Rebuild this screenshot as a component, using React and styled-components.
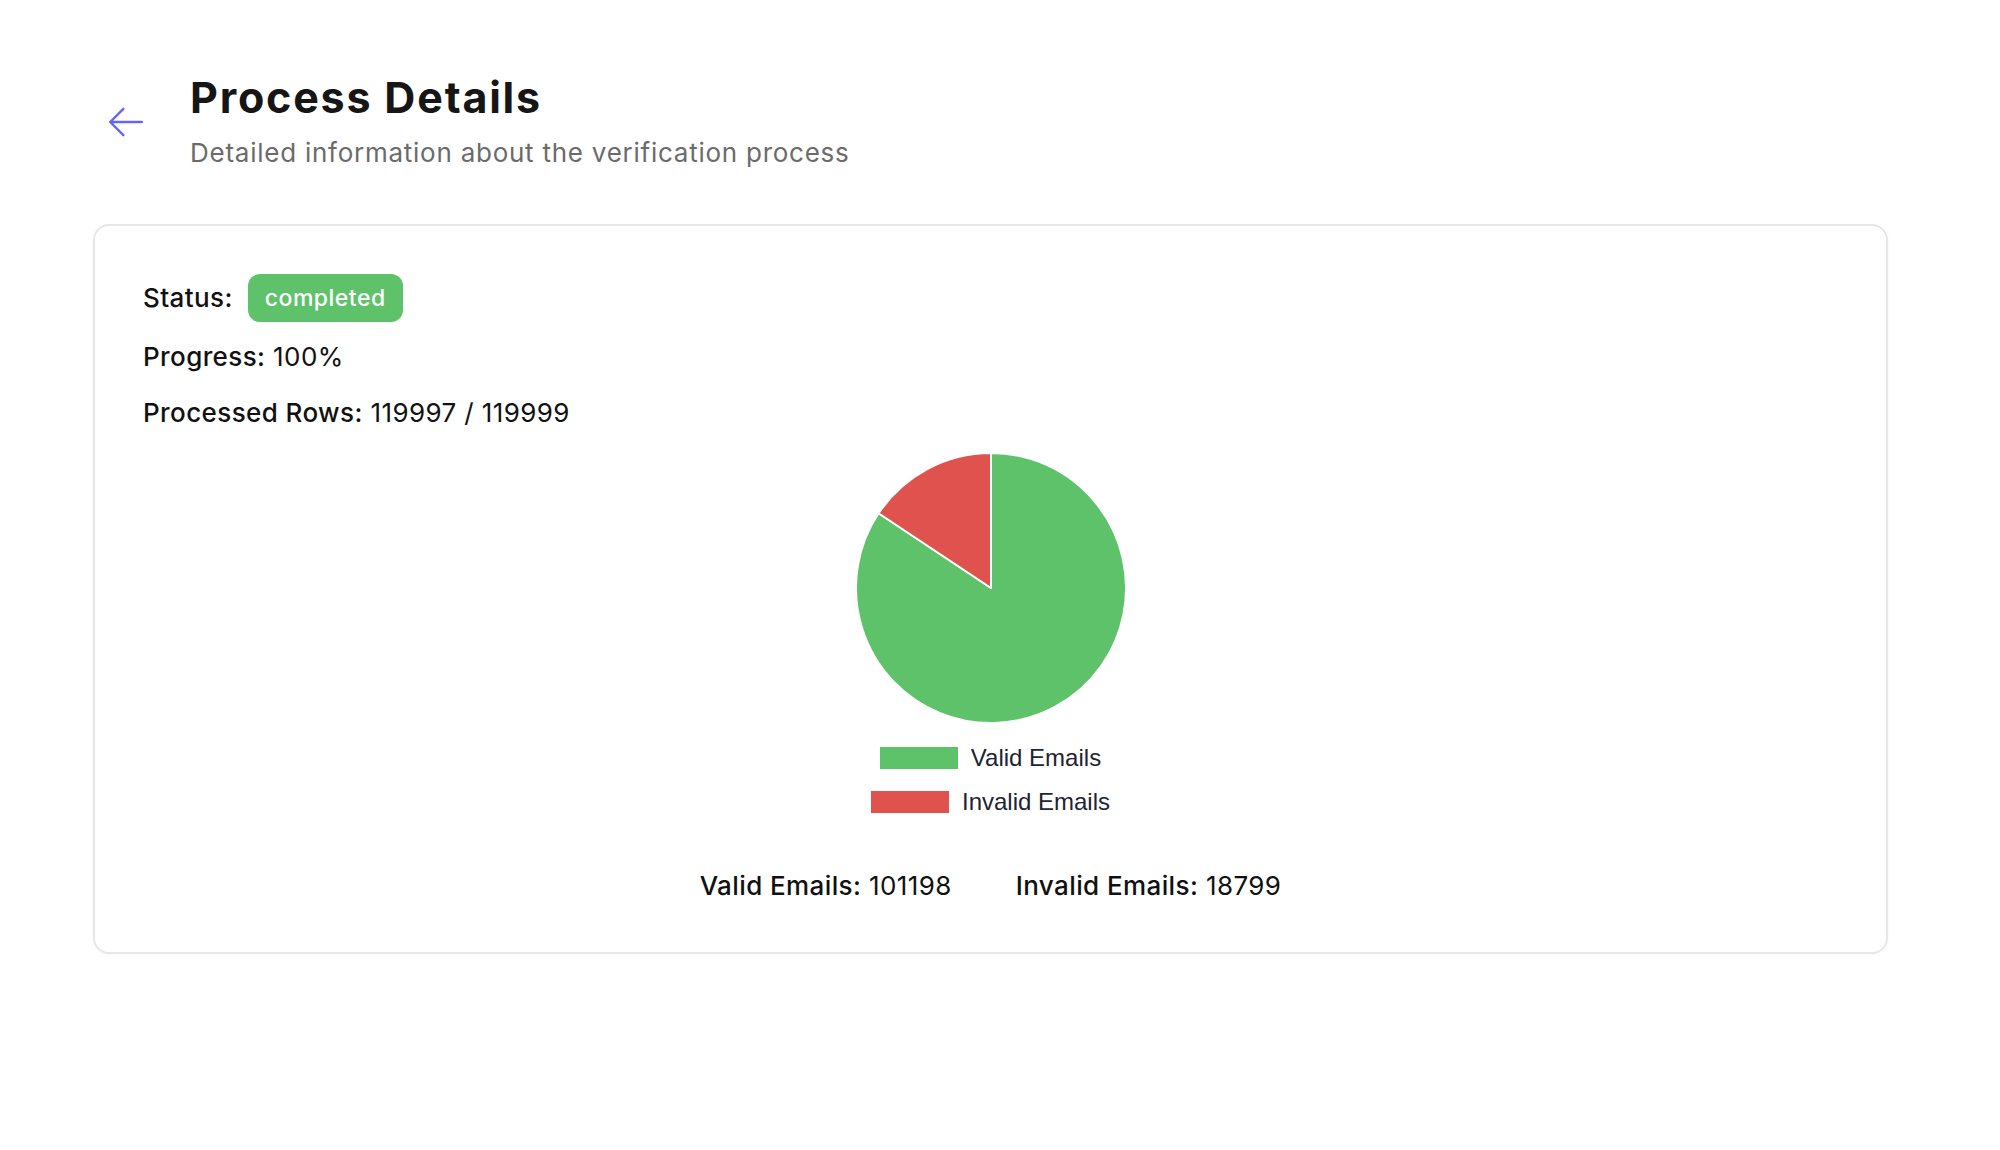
import React from 'react'
import styled, { createGlobalStyle } from 'styled-components'

const GlobalStyle = createGlobalStyle`
    body {
        margin: 0;
        background: #ffffff;
        font-family: Inter, "Noto Sans", sans-serif;
        color: #111111;
    }
`

const Page = styled.div`
    padding: 73px 112px 60px 93px;
`

const Header = styled.header`
    display: flex;
    align-items: center;
    gap: 43px;
    padding-left: 12px;
`

const BackButton = styled.button`
    display: flex;
    align-items: center;
    justify-content: center;
    width: 42px;
    height: 42px;
    padding: 0;
    border: none;
    background: none;
    color: #6366f1;
    cursor: pointer;
`

const TitleBlock = styled.div`
    display: flex;
    flex-direction: column;
    gap: 15px;
`

const Title = styled.h1`
    margin: 0;
    font-size: 43px;
    line-height: 48px;
    font-weight: 700;
    letter-spacing: 1.8px;
    color: #161616;
`

const Subtitle = styled.p`
    margin: 0;
    font-size: 26px;
    line-height: 34px;
    letter-spacing: 0.75px;
    color: #6b6b6b;
`

const Card = styled.section`
    margin-top: 54px;
    border: 2px solid #e7e7e7;
    border-radius: 16px;
    padding: 48px 48px 50px;
    box-shadow: 0 1px 3px rgba(0, 0, 0, 0.04);
`

const Row = styled.div`
    display: flex;
    align-items: center;
    gap: 15px;
    margin-top: ${p => p.$mt || 0}px;
    font-size: 26px;
    line-height: 32px;
    letter-spacing: 0.4px;
`

const Label = styled.span`
    font-weight: 500;
`

const Badge = styled.span`
    display: inline-flex;
    align-items: center;
    height: 48px;
    padding: 0 17px;
    border-radius: 12px;
    background: #5ec26a;
    color: #ffffff;
    font-size: 23px;
    font-weight: 500;
    letter-spacing: 0.5px;
`

const ChartArea = styled.div`
    display: flex;
    flex-direction: column;
    align-items: center;
    margin-top: 23px;
`

const Legend = styled.div`
    display: flex;
    flex-direction: column;
    align-items: center;
    gap: 22px;
    margin-top: 23px;
`

const LegendItem = styled.div`
    display: flex;
    align-items: center;
    gap: 13px;
    height: 22px;
    font-family: "Liberation Sans", Arial, sans-serif;
    font-size: 24px;
    color: #1e2433;
`

const Swatch = styled.span`
    width: 78px;
    height: 22px;
    background: ${p => p.$color};
`

const Stats = styled.div`
    display: flex;
    justify-content: center;
    gap: 64px;
    margin-top: 57px;
    font-size: 26px;
    line-height: 32px;
    letter-spacing: 0.4px;
`

const GREEN = '#5ec26a'
const RED = '#df524e'

const slicePath = (cx, cy, r, from, to) => {
    // angles in fractions of a turn, measured clockwise from 12 o'clock
    const pt = a => [cx + r * Math.sin(a * 2 * Math.PI), cy - r * Math.cos(a * 2 * Math.PI)]
    const [x1, y1] = pt(from)
    const [x2, y2] = pt(to)
    const large = to - from > 0.5 ? 1 : 0
    return `M${cx},${cy} L${x1},${y1} A${r},${r} 0 ${large} 1 ${x2},${y2} Z`
}

const PieChart = ({ data, size }) => {
    const total = data.reduce((s, d) => s + d.value, 0)
    const r = size / 2
    let acc = 0
    return (
        <svg width={size} height={size} viewBox={`0 0 ${size} ${size}`}>
            {data.map(d => {
                const from = acc / total
                acc += d.value
                const to = acc / total
                return (
                    <path
                        key={d.label}
                        d={slicePath(r, r, r - 1, from, to)}
                        fill={d.color}
                        stroke="#ffffff"
                        strokeWidth={2}
                        strokeLinejoin="round"
                    />
                )
            })}
        </svg>
    )
}

const ArrowLeft = () => (
    <svg width="42" height="42" viewBox="0 0 24 24" fill="none" stroke="currentColor" strokeWidth="1.4" strokeLinecap="round" strokeLinejoin="round">
        <path d="M10.5 19.5 3 12m0 0 7.5-7.5M3 12h18" />
    </svg>
)

export default function App() {
    const process = {
        status: 'completed',
        progress: 100,
        processed: 119997,
        total: 119999,
        valid: 101198,
        invalid: 18799,
    }

    const chartData = [
        { label: 'Valid Emails', value: process.valid, color: GREEN },
        { label: 'Invalid Emails', value: process.invalid, color: RED },
    ]

    return (
        <>
            <GlobalStyle />
            <Page>
                <Header>
                    <BackButton aria-label="Back">
                        <ArrowLeft />
                    </BackButton>
                    <TitleBlock>
                        <Title>Process Details</Title>
                        <Subtitle>Detailed information about the verification process</Subtitle>
                    </TitleBlock>
                </Header>

                <Card>
                    <Row>
                        <Label>Status:</Label>
                        <Badge>{process.status}</Badge>
                    </Row>
                    <Row $mt={19}>
                        <span><Label>Progress:</Label> {process.progress}%</span>
                    </Row>
                    <Row $mt={24}>
                        <span><Label>Processed Rows:</Label> {process.processed} / {process.total}</span>
                    </Row>

                    <ChartArea>
                        <PieChart data={chartData} size={272} />
                        <Legend>
                            {chartData.map(d => (
                                <LegendItem key={d.label}>
                                    <Swatch $color={d.color} />
                                    {d.label}
                                </LegendItem>
                            ))}
                        </Legend>
                    </ChartArea>

                    <Stats>
                        <span><Label>Valid Emails:</Label> {process.valid}</span>
                        <span><Label>Invalid Emails:</Label> {process.invalid}</span>
                    </Stats>
                </Card>
            </Page>
        </>
    )
}
